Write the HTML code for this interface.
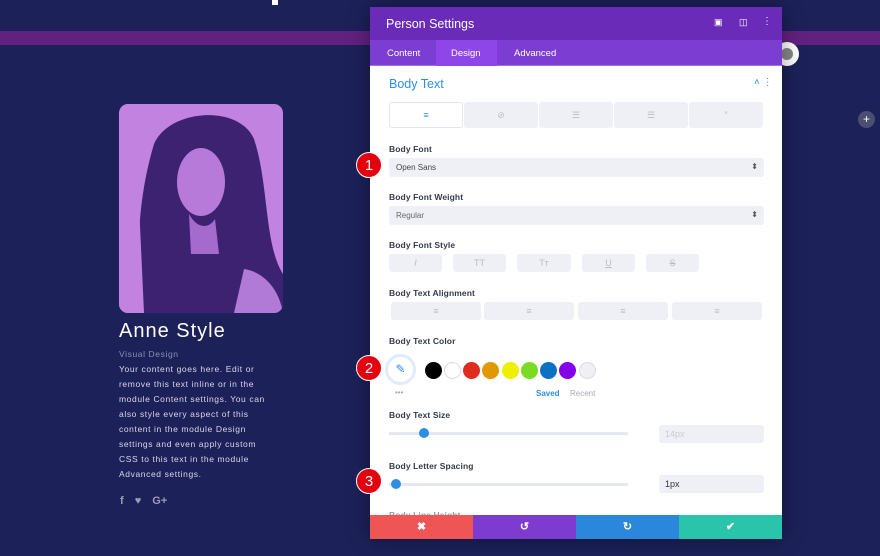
<!DOCTYPE html>
<html><head><meta charset="utf-8"><style>
*{box-sizing:border-box;margin:0;padding:0}
body{width:880px;height:556px;overflow:hidden;background:#1c2159;font-family:"Liberation Sans",sans-serif;position:relative}
.abs{position:absolute}
.band{left:0;top:31px;width:880px;height:14px;background:#62217f}
.panel{left:370px;top:7px;width:412px;height:532px;background:#fff;overflow:hidden;box-shadow:0 0 20px rgba(0,0,0,.4)}
.hdr{height:33px;background:#6a2cb8;color:#fff;font-size:12.5px;padding:10px 0 0 16px}
.tabs{height:26px;background:#7c3dd2;position:relative;border-bottom:1px solid #a070e0}
.tab{position:absolute;top:8px;color:#fff;font-size:9.5px}
.lbl{position:absolute;left:19px;font-size:8.5px;color:#333a4a;font-weight:bold;letter-spacing:.1px}
.sel{position:absolute;left:19px;width:375px;height:19px;background:#eef0f6;border-radius:3px;font-size:8px;color:#444;padding:5px 7px}
.sel:after{content:"⬍";position:absolute;right:6px;top:4px;font-size:8px;color:#555}
.btn{position:absolute;height:18px;background:#eef0f6;border-radius:3px;color:#b8bcc8;font-size:9px;text-align:center;line-height:18px}
.dot{position:absolute;width:17px;height:17px;border-radius:50%;top:355px}
.num{position:absolute;width:26px;height:26px;border-radius:50%;background:#e3000f;color:#fff;font-size:15px;text-align:center;line-height:25px;border:1.5px solid #fff;left:356px}
.txt{color:#d8d8e8;font-size:8.5px;line-height:15px;letter-spacing:.6px}
</style></head><body>
<div class="abs band"></div>
<div class="abs" style="left:272px;top:0;width:6px;height:5px;background:#fff"></div>
<svg class="abs" style="left:119px;top:104px" width="164" height="209" viewBox="0 0 164 209">
<defs><clipPath id="c"><rect width="164" height="209" rx="9"/></clipPath></defs>
<g clip-path="url(#c)">
<rect width="164" height="209" fill="#c283e0"/>
<path d="M25 209 C15 150 20 90 35 40 C50 5 120 0 135 35 C150 80 145 140 164 170 L164 209Z" fill="#3d2272"/>
<ellipse cx="82" cy="78" rx="24" ry="34" fill="#b77ad8"/>
<path d="M70 110 C78 125 90 125 96 115 L100 150 L72 150Z" fill="#a56bcc"/>
<path d="M125 165 C145 168 160 185 164 209 L115 209Z" fill="#b07ad6"/>
<path d="M0 120 L20 100 L25 209 L0 209Z" fill="#c283e0"/>
</g></svg>
<div class="abs" style="left:119px;top:320px;color:#fff;font-size:20px;letter-spacing:1px">Anne Style</div>
<div class="abs txt" style="left:119px;top:347px;color:#8c8fae">Visual Design</div>
<div class="abs txt" style="left:119px;top:362px;width:154px">Your content goes here. Edit or remove this text inline or in the module Content settings. You can also style every aspect of this content in the module Design settings and even apply custom CSS to this text in the module Advanced settings.</div>
<div class="abs" style="left:120px;top:495px;color:#9a9cb8;font-size:11px;font-weight:bold;word-spacing:8px">f ♥ G+</div>
<div class="abs" style="left:775px;top:42px;width:24px;height:24px;border-radius:50%;background:#fff"><div style="margin:6px;width:12px;height:12px;border-radius:50%;background:#888"></div></div>
<div class="abs" style="left:858px;top:111px;width:17px;height:17px;border-radius:50%;background:#4a4e70;color:#fff;font-size:12px;text-align:center;line-height:16px">+</div>

<div class="abs panel">
<div class="hdr">Person Settings<span style="position:absolute;left:344px;top:10px;font-size:9px">▣</span><span style="position:absolute;left:369px;top:10px;font-size:9px">◫</span><span style="position:absolute;left:392px;top:9px;font-size:10px">⋮</span></div>
<div class="tabs"><div style="position:absolute;left:66px;top:0;width:61px;height:26px;background:#8e46e8"></div>
<span class="tab" style="left:17px">Content</span><span class="tab" style="left:81px">Design</span><span class="tab" style="left:144px">Advanced</span></div>
<div class="abs" style="left:19px;top:70px;color:#2e8ee0;font-size:12.5px">Body Text</div>
<div class="abs" style="left:384px;top:70px;color:#2e8ee0;font-size:10px">˄ ⋮</div>
<div class="btn" style="left:19px;top:95px;width:74px;height:26px;background:#fff;border:1px solid #e4e6ee;color:#2e8ee0;line-height:24px">≡</div>
<div class="btn" style="left:94px;top:95px;width:74px;height:26px;line-height:26px">⊘</div>
<div class="btn" style="left:169px;top:95px;width:74px;height:26px;line-height:26px">☰</div>
<div class="btn" style="left:244px;top:95px;width:74px;height:26px;line-height:26px">☰</div>
<div class="btn" style="left:319px;top:95px;width:74px;height:26px;line-height:26px">”</div>
<div class="lbl" style="top:137px">Body Font</div>
<div class="sel" style="top:151px">Open Sans</div>
<div class="lbl" style="top:185px">Body Font Weight</div>
<div class="sel" style="top:199px;color:#666">Regular</div>
<div class="lbl" style="top:233px">Body Font Style</div>
<div class="btn" style="left:19px;top:247px;width:53px"><i>I</i></div>
<div class="btn" style="left:83px;top:247px;width:53px">TT</div>
<div class="btn" style="left:147px;top:247px;width:54px">Tт</div>
<div class="btn" style="left:212px;top:247px;width:53px"><u>U</u></div>
<div class="btn" style="left:276px;top:247px;width:53px"><s>S</s></div>
<div class="lbl" style="top:281px">Body Text Alignment</div>
<div class="btn" style="left:21px;top:295px;width:90px">≡</div>
<div class="btn" style="left:114px;top:295px;width:90px">≡</div>
<div class="btn" style="left:208px;top:295px;width:90px">≡</div>
<div class="btn" style="left:302px;top:295px;width:90px">≡</div>
<div class="lbl" style="top:329px">Body Text Color</div>
<div class="abs" style="left:15px;top:347px;width:31px;height:31px;border-radius:50%;border:3px solid #e0ecf8;color:#2e8ee0;text-align:center;line-height:25px;font-size:12px">✎</div>
<div class="abs" style="left:25px;top:381px;color:#aaa;font-size:8px">•••</div>
<div class="dot" style="left:55px;background:#000"></div>
<div class="dot" style="left:74px;background:#fff;border:1px solid #ddd"></div>
<div class="dot" style="left:93px;background:#e02b20"></div>
<div class="dot" style="left:112px;background:#e09900"></div>
<div class="dot" style="left:132px;background:#edf000"></div>
<div class="dot" style="left:151px;background:#7cda24"></div>
<div class="dot" style="left:170px;background:#0c71c3"></div>
<div class="dot" style="left:189px;background:#8300e9"></div>
<div class="dot" style="left:209px;background:#eef0f6;border:1px solid #ddd"></div>
<div class="abs" style="left:166px;top:382px;font-size:8px;color:#2e8ee0;font-weight:bold">Saved</div>
<div class="abs" style="left:200px;top:382px;font-size:8px;color:#aab">Recent</div>
<div class="lbl" style="top:403px">Body Text Size</div>
<div class="abs" style="left:19px;top:425px;width:239px;height:3px;background:#e4e8f0"></div>
<div class="abs" style="left:49px;top:421px;width:10px;height:10px;border-radius:50%;background:#2e8ee0"></div>
<div class="btn" style="left:289px;top:418px;width:105px;text-align:left;padding-left:6px;color:#c8ccd6">14px</div>
<div class="lbl" style="top:454px">Body Letter Spacing</div>
<div class="abs" style="left:19px;top:476px;width:239px;height:3px;background:#e4e8f0"></div>
<div class="abs" style="left:21px;top:472px;width:10px;height:10px;border-radius:50%;background:#2e8ee0"></div>
<div class="btn" style="left:289px;top:468px;width:105px;text-align:left;padding-left:6px;color:#333">1px</div>
<div class="lbl" style="top:503px;color:#999">Body Line Height</div>
<div class="abs" style="left:0;top:508px;width:412px;height:24px;display:flex;color:#fff;font-size:11px;font-weight:bold;text-align:center;line-height:24px">
<div style="flex:1;background:#ef5555">✖</div><div style="flex:1;background:#7d3bcf">↺</div><div style="flex:1;background:#2b87da">↻</div><div style="flex:1;background:#29c4a9">✔</div></div>
</div>
<div class="num" style="top:152px">1</div>
<div class="num" style="top:355px">2</div>
<div class="num" style="top:468px">3</div>
</body></html>
